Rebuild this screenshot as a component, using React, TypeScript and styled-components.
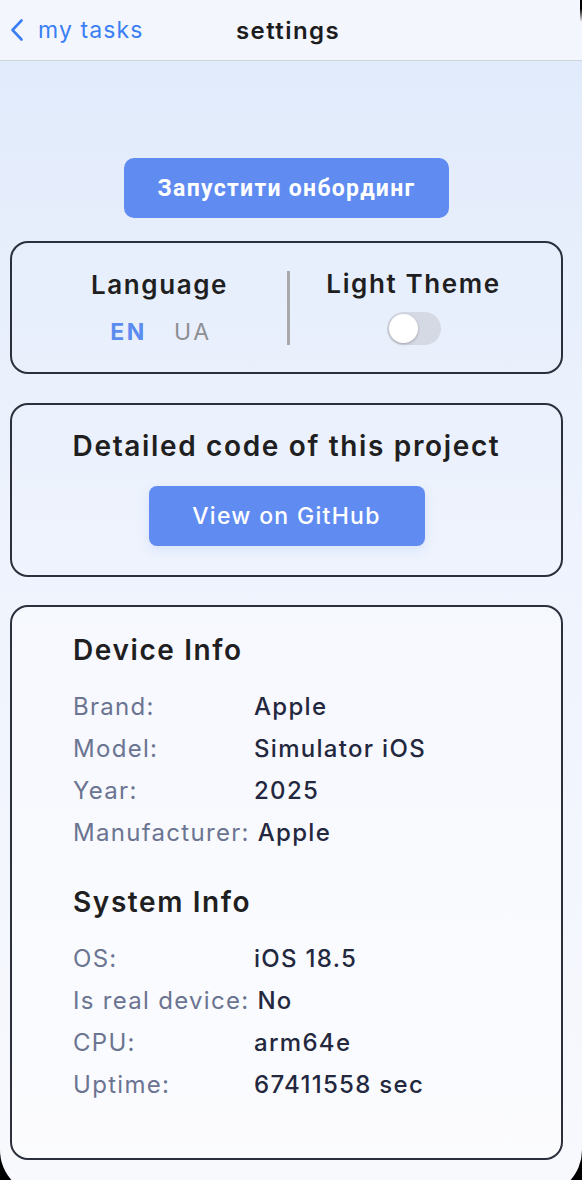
import styled, { createGlobalStyle } from "styled-components"

const GlobalStyle = createGlobalStyle`
  html, body {
    margin: 0;
    padding: 0;
    background: #000000;
    overflow: hidden;
  }

  body {
    font-family: Inter, "Noto Sans", sans-serif;
  }
`

const deviceRows = [
  { label: "Brand:", value: "Apple" },
  { label: "Model:", value: "Simulator iOS" },
  { label: "Year:", value: "2025" },
  { label: "Manufacturer:", value: "Apple" },
]

const systemRows = [
  { label: "OS:", value: "iOS 18.5" },
  { label: "Is real device:", value: "No" },
  { label: "CPU:", value: "arm64e" },
  { label: "Uptime:", value: "67411558 sec" },
]

export default function App() {
  return (
    <>
      <GlobalStyle />
      <Screen>
        <Header>
          <BackLink>
            <svg width="14" height="24" viewBox="0 0 14 24" fill="none">
              <path
                d="M11.5 2.5L2.5 12l9 9.5"
                stroke="#3b7ff5"
                strokeWidth="2.6"
                strokeLinecap="round"
                strokeLinejoin="round"
              />
            </svg>
            <span>my tasks</span>
          </BackLink>
          <HeaderTitle>settings</HeaderTitle>
          <span />
        </Header>

        <Content>
          <OnboardingButton>Запустити онбординг</OnboardingButton>

          <Card $gap={29}>
            <PrefsRow>
              <PrefColumn>
                <PrefTitle>Language</PrefTitle>
                <LangSwitch>
                  <LangOption $active>EN</LangOption>
                  <LangOption>UA</LangOption>
                </LangSwitch>
              </PrefColumn>
              <Divider />
              <PrefColumn $raised>
                <PrefTitle>Light Theme</PrefTitle>
                <Toggle>
                  <Thumb />
                </Toggle>
              </PrefColumn>
            </PrefsRow>
          </Card>

          <Card $gap={28}>
            <ProjectBox>
              <ProjectTitle>Detailed code of this project</ProjectTitle>
              <GitHubButton>View on GitHub</GitHubButton>
            </ProjectBox>
          </Card>

          <InfoCard>
            <SectionTitle>Device Info</SectionTitle>
            <Rows>
              {deviceRows.map((row) => (
                <InfoRow key={row.label}>
                  <Label>{row.label}</Label>
                  <Value>{row.value}</Value>
                </InfoRow>
              ))}
            </Rows>
            <SectionTitle>System Info</SectionTitle>
            <Rows>
              {systemRows.map((row) => (
                <InfoRow key={row.label}>
                  <Label>{row.label}</Label>
                  <Value>{row.value}</Value>
                </InfoRow>
              ))}
            </Rows>
          </InfoCard>
        </Content>
      </Screen>
    </>
  )
}

const Screen = styled.div`
  position: relative;
  height: 1195px;
  display: flex;
  flex-direction: column;
  background: linear-gradient(180deg, #e0eafb 0%, #eef3fd 45%, #f8f9fd 100%);
  border-radius: 0 0 45px 45px;
  overflow: hidden;

  &::after {
    content: "";
    position: absolute;
    top: 0;
    right: 0;
    width: 2px;
    height: 22px;
    background: linear-gradient(180deg, #000000 40%, rgba(0, 0, 0, 0));
  }
`

const Header = styled.header`
  height: 60px;
  flex-shrink: 0;
  display: grid;
  grid-template-columns: 1fr auto 1fr;
  align-items: center;
  padding: 0 10px;
  background: #f3f6fc;
  border-bottom: 1px solid #cfd3da;
`

const BackLink = styled.div`
  display: flex;
  align-items: center;
  gap: 14px;
  color: #3b7ff5;
  font-size: 23px;
  font-weight: 400;
  letter-spacing: 1.1px;
`

const HeaderTitle = styled.h1`
  margin: 0 0 0 -6px;
  font-size: 24px;
  font-weight: 600;
  letter-spacing: 1.4px;
  color: #1c1c1e;
`

const Content = styled.main`
  display: flex;
  flex-direction: column;
  align-items: stretch;
  padding: 97px 19px 0 10px;
`

const OnboardingButton = styled.button`
  align-self: center;
  width: 325px;
  height: 60px;
  margin-bottom: 23px;
  border: none;
  border-radius: 10px;
  background: #608cf2;
  color: #ffffff;
  font-family: Roboto, "Noto Sans", sans-serif;
  font-size: 23px;
  font-weight: 700;
  letter-spacing: 1.3px;
`

type CardProps = {
  $gap: number
}

const Card = styled.section<CardProps>`
  margin-bottom: ${({ $gap }) => $gap}px;
  border: 2px solid #2b303c;
  border-radius: 18px;
`

const PrefsRow = styled.div`
  height: 129px;
  display: flex;
  align-items: center;
  justify-content: center;
`

type PrefColumnProps = {
  $raised?: boolean
}

const PrefColumn = styled.div<PrefColumnProps>`
  width: 200px;
  display: flex;
  flex-direction: column;
  align-items: center;
  transform: translateY(${({ $raised }) => ($raised ? "-1px" : "0")});

  &:first-child {
    margin-right: 27px;
  }

  &:last-child {
    margin-left: 24px;
  }
`

const PrefTitle = styled.div`
  font-size: 26px;
  font-weight: 600;
  letter-spacing: 1.6px;
  color: #1f1f22;
  line-height: 30px;
`

const LangSwitch = styled.div`
  display: flex;
  gap: 27px;
  margin: 18px 0 0 3px;
`

type LangOptionProps = {
  $active?: boolean
}

const LangOption = styled.span<LangOptionProps>`
  font-size: 23px;
  line-height: 28px;
  letter-spacing: 2.6px;
  font-weight: ${({ $active }) => ($active ? 700 : 400)};
  color: ${({ $active }) => ($active ? "#5c8cf0" : "#8e8e93")};
`

const Divider = styled.div`
  width: 3px;
  height: 74px;
  background: #a9a9ab;
`

const Toggle = styled.div`
  width: 54px;
  height: 33px;
  margin-top: 13px;
  padding: 2px;
  box-sizing: border-box;
  border-radius: 17px;
  background: #d5d9e3;
  display: flex;
  align-items: center;
`

const Thumb = styled.div`
  width: 29px;
  height: 29px;
  border-radius: 50%;
  background: #ffffff;
  box-shadow: 0 1px 3px rgba(0, 0, 0, 0.25);
`

const ProjectBox = styled.div`
  height: 170px;
  display: flex;
  flex-direction: column;
  align-items: center;
  padding-top: 24px;
  box-sizing: border-box;
`

const ProjectTitle = styled.h2`
  margin: 0;
  font-size: 28px;
  line-height: 34px;
  font-weight: 600;
  letter-spacing: 1.65px;
  color: #1f1f22;
`

const GitHubButton = styled.button`
  width: 276px;
  height: 60px;
  margin-top: 23px;
  border: none;
  border-radius: 8px;
  background: #608cf2;
  color: #ffffff;
  font-family: Inter, "Noto Sans", sans-serif;
  font-size: 23px;
  font-weight: 500;
  letter-spacing: 1.3px;
  box-shadow: 0 4px 12px rgba(96, 140, 242, 0.15);
`

const InfoCard = styled.section`
  height: 555px;
  box-sizing: border-box;
  padding: 26px 20px 0 61px;
  border: 2px solid #2b303c;
  border-radius: 18px;
  background: rgba(255, 255, 255, 0.45);
`

const SectionTitle = styled.h3`
  margin: 0;
  font-size: 28px;
  line-height: 34px;
  font-weight: 600;
  letter-spacing: 1.6px;
  color: #1f1f22;
`

const Rows = styled.div`
  display: flex;
  flex-direction: column;
  gap: 14px;
  margin: 26px 0 38px;
`

const InfoRow = styled.div`
  display: flex;
  align-items: baseline;
  font-size: 24px;
  line-height: 28px;
`

const Label = styled.span`
  min-width: 173px;
  margin-right: 8px;
  color: #6b7491;
  font-weight: 400;
  letter-spacing: 1.3px;
`

const Value = styled.span`
  color: #23283f;
  font-weight: 500;
  letter-spacing: 1.3px;
`
